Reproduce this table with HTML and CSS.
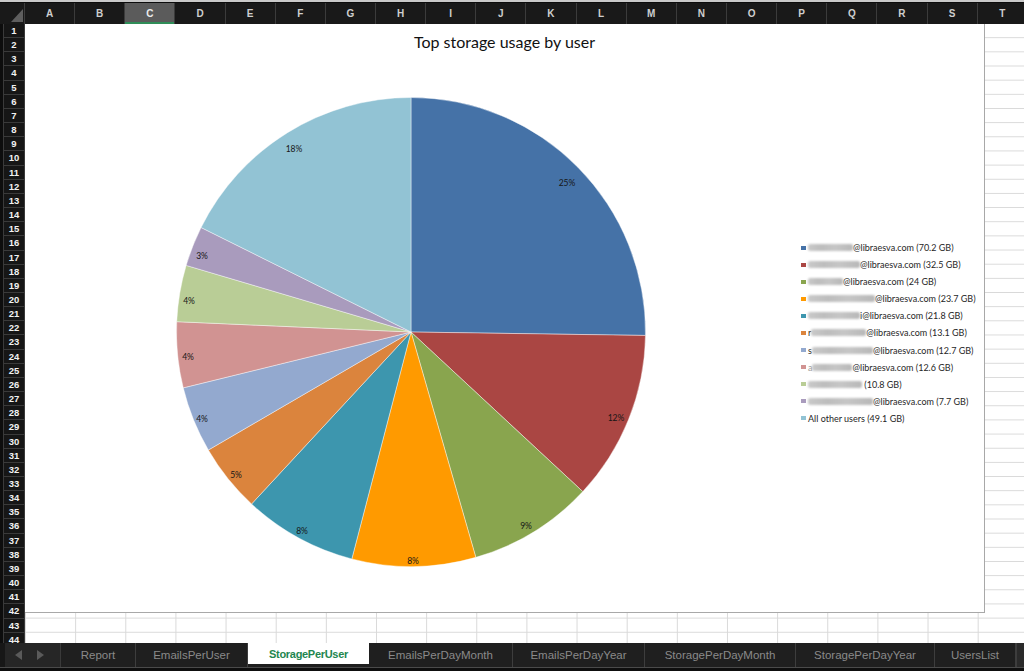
FILE: index.html
```html
<!DOCTYPE html>
<html>
<head>
<meta charset="utf-8">
<title>StoragePerUser</title>
<link rel="stylesheet" href="styles.css">
</head>
<body>
<div class="topstrip"></div>
<div class="colheads">
  <div class="corner"><svg width="25" height="22" viewBox="0 0 25 22"><polygon points="11,19 23,19 23,6" fill="#5e5e5e"/></svg></div>
  <div class="ch">A</div><div class="ch">B</div><div class="ch sel">C</div><div class="ch">D</div><div class="ch">E</div>
  <div class="ch">F</div><div class="ch">G</div><div class="ch">H</div><div class="ch">I</div><div class="ch">J</div>
  <div class="ch">K</div><div class="ch">L</div><div class="ch">M</div><div class="ch">N</div><div class="ch">O</div>
  <div class="ch">P</div><div class="ch">Q</div><div class="ch">R</div><div class="ch">S</div><div class="ch">T</div>
</div>
<div class="sheetbody">
  <div class="rowheads">
    <div class="rh">1</div><div class="rh">2</div><div class="rh">3</div><div class="rh">4</div><div class="rh">5</div>
    <div class="rh">6</div><div class="rh">7</div><div class="rh">8</div><div class="rh">9</div><div class="rh">10</div>
    <div class="rh">11</div><div class="rh">12</div><div class="rh">13</div><div class="rh">14</div><div class="rh">15</div>
    <div class="rh">16</div><div class="rh">17</div><div class="rh">18</div><div class="rh">19</div><div class="rh">20</div>
    <div class="rh">21</div><div class="rh">22</div><div class="rh">23</div><div class="rh">24</div><div class="rh">25</div>
    <div class="rh">26</div><div class="rh">27</div><div class="rh">28</div><div class="rh">29</div><div class="rh">30</div>
    <div class="rh">31</div><div class="rh">32</div><div class="rh">33</div><div class="rh">34</div><div class="rh">35</div>
    <div class="rh">36</div><div class="rh">37</div><div class="rh">38</div><div class="rh">39</div><div class="rh">40</div>
    <div class="rh">41</div><div class="rh">42</div><div class="rh">43</div><div class="rh">44</div>
  </div>
  <div class="cells">
    <div class="chart">
      <div class="chart-title">Top storage usage by user</div>
      <div class="plot">
        <svg class="pie" width="700" height="557" viewBox="0 0 700 557">
          <g stroke="#ffffff" stroke-width="0.6" stroke-opacity="0.7">
            <path fill="#4572a7" d="M386,278 L386,43.5 A234.5,234.5 0 0 1 620.47,281.44 Z"/>
            <path fill="#aa4643" d="M386,278 L620.47,281.44 A234.5,234.5 0 0 1 557.79,437.62 Z"/>
            <path fill="#89a54e" d="M386,278 L557.79,437.62 A234.5,234.5 0 0 1 450.82,503.36 Z"/>
            <path fill="#ff9a00" d="M386,278 L450.82,503.36 A234.5,234.5 0 0 1 326.80,504.91 Z"/>
            <path fill="#3d96ae" d="M386,278 L326.80,504.91 A234.5,234.5 0 0 1 226.57,449.97 Z"/>
            <path fill="#db843d" d="M386,278 L226.57,449.97 A234.5,234.5 0 0 1 183.36,396.02 Z"/>
            <path fill="#93a9cf" d="M386,278 L183.36,396.02 A234.5,234.5 0 0 1 158.25,333.86 Z"/>
            <path fill="#d19392" d="M386,278 L158.25,333.86 A234.5,234.5 0 0 1 151.73,267.68 Z"/>
            <path fill="#b9cd96" d="M386,278 L151.73,267.68 A234.5,234.5 0 0 1 161.16,211.40 Z"/>
            <path fill="#a99bbd" d="M386,278 L161.16,211.40 A234.5,234.5 0 0 1 176.07,173.50 Z"/>
            <path fill="#92c3d4" d="M386,278 L176.07,173.50 A234.5,234.5 0 0 1 386,43.5 Z"/>
          </g>
          <g class="plabels" text-anchor="middle">
            <text x="542" y="129">25%</text>
            <text x="591" y="364">12%</text>
            <text x="501" y="472">9%</text>
            <text x="388" y="507">8%</text>
            <text x="277" y="477">8%</text>
            <text x="211" y="421">5%</text>
            <text x="177" y="365">4%</text>
            <text x="163" y="303">4%</text>
            <text x="164" y="247">4%</text>
            <text x="177" y="202">3%</text>
            <text x="269" y="95">18%</text>
          </g>
        </svg>
        <ul class="legend">
          <li><i class="mk c1"></i><span class="redact w45"></span>@libraesva.com (70.2 GB)</li>
          <li><i class="mk c2"></i><span class="redact w52"></span>@libraesva.com (32.5 GB)</li>
          <li><i class="mk c3"></i><span class="redact w35"></span>@libraesva.com (24 GB)</li>
          <li><i class="mk c4"></i><span class="redact w67"></span>@libraesva.com (23.7 GB)</li>
          <li><i class="mk c5"></i><span class="redact w52"></span>i@libraesva.com (21.8 GB)</li>
          <li><i class="mk c6"></i>r<span class="redact w55"></span>@libraesva.com (13.1 GB)</li>
          <li><i class="mk c7"></i>s<span class="redact w61"></span>@libraesva.com (12.7 GB)</li>
          <li><i class="mk c8"></i><span class="faint">a</span><span class="redact w40"></span>@libraesva.com (12.6 GB)</li>
          <li><i class="mk c9"></i><span class="redact w54"></span>&nbsp;(10.8 GB)</li>
          <li><i class="mk c10"></i><span class="redact w65"></span>@libraesva.com (7.7 GB)</li>
          <li><i class="mk c11"></i>All other users (49.1 GB)</li>
        </ul>
      </div>
    </div>
  </div>
</div>
<div class="tabbar">
  <div class="navarrows">
    <svg width="8" height="10" viewBox="0 0 8 10"><polygon points="7,0 7,10 0,5" fill="#5a5a5a"/></svg>
    <svg width="8" height="10" viewBox="0 0 8 10"><polygon points="1,0 1,10 8,5" fill="#5a5a5a"/></svg>
  </div>
  <div class="tab t75">Report</div>
  <div class="tab t112">EmailsPerUser</div>
  <div class="tab t121 active">StoragePerUser</div>
  <div class="tab t144">EmailsPerDayMonth</div>
  <div class="tab t132">EmailsPerDayYear</div>
  <div class="tab t151">StoragePerDayMonth</div>
  <div class="tab t139">StoragePerDayYear</div>
  <div class="tab t81">UsersList</div>
  <div class="tabfill"></div>
</div>
<div class="statusbar"></div>
</body>
</html>
```
FILE: styles.css
```css
html, body {
  margin: 0;
  padding: 0;
}
body {
  width: 1024px;
  height: 671px;
  overflow: hidden;
  background: #1b1b1b;
  font-family: "Liberation Sans", Arial, sans-serif;
}
.topstrip {
  height: 2px;
  background: #c9c9c9;
}
.colheads {
  display: flex;
  height: 22px;
  background: #191919;
  overflow: hidden;
  border-top: 1px solid #0c0c0c;
  box-sizing: border-box;
}
.corner {
  width: 25px;
  flex: 0 0 25px;
  box-sizing: border-box;
  border-right: 1px solid #3c3c3c;
}
.corner svg { display: block; }
.ch {
  flex: 0 0 50.15px;
  width: 50.15px;
  box-sizing: border-box;
  border-right: 1px solid #3b3b3b;
  color: #cfcfcf;
  font-weight: bold;
  font-size: 10px;
  line-height: 21px;
  text-align: center;
}
.ch.sel {
  background: #5b5b5b;
  color: #ececec;
  box-shadow: inset 0 -2px 0 #2f8d58;
}
.sheetbody {
  display: flex;
  height: 619px;
  overflow: hidden;
}
.rowheads {
  flex: 0 0 25px;
  width: 25px;
  background: #0d0d0d;
  padding-left: 3px;
  box-sizing: border-box;
}
.rh {
  height: 14.17px;
  box-sizing: border-box;
  background: #161616;
  border: 1px solid #3a3a3a;
  border-top: none;
  color: #f2f2f2;
  font-weight: bold;
  font-size: 9.5px;
  line-height: 13px;
  text-align: center;
}
.cells {
  flex: 1;
  position: relative;
  background-color: #ffffff;
  background-image:
    linear-gradient(to right, #d9d9d9 1px, transparent 1px),
    linear-gradient(to bottom, transparent 13.17px, #d9d9d9 13.17px);
  background-size: 50.15px 14.17px, 50.15px 14.17px;
}
.chart {
  position: absolute;
  left: 0;
  top: 0;
  width: 960px;
  height: 589px;
  box-sizing: border-box;
  background: #ffffff;
  border-right: 1px solid #a8a8a8;
  border-bottom: 1px solid #a8a8a8;
  display: flex;
  flex-direction: column;
}
.chart-title {
  height: 30px;
  box-sizing: border-box;
  padding-top: 8px;
  text-align: center;
  font-family: Lato, "Liberation Sans", sans-serif;
  font-size: 16px;
  line-height: 20px;
  color: #111;
}
.plot {
  flex: 1;
  display: flex;
  align-items: center;
}
.pie {
  display: block;
  flex: 0 0 700px;
  align-self: flex-start;
}
.plabels text {
  font-family: Lato, "Liberation Sans", sans-serif;
  font-size: 8.5px;
  fill: #161616;
  dominant-baseline: central;
}
.legend {
  list-style: none;
  margin: 0 0 0 76px;
  padding: 0;
  font-family: Lato, "Liberation Sans", sans-serif;
  font-size: 9px;
  color: #262626;
}
.legend li {
  height: 17.03px;
  display: flex;
  align-items: center;
  white-space: nowrap;
}
.mk {
  display: inline-block;
  width: 4.5px;
  height: 4.5px;
  margin-right: 2.5px;
  flex: 0 0 auto;
}
.c1 { background: #4572a7; }
.c2 { background: #aa4643; }
.c3 { background: #89a54e; }
.c4 { background: #ff9a00; }
.c5 { background: #3d96ae; }
.c6 { background: #db843d; }
.c7 { background: #93a9cf; }
.c8 { background: #d19392; }
.c9 { background: #b9cd96; }
.c10 { background: #a99bbd; }
.c11 { background: #92c3d4; }
.redact {
  display: inline-block;
  height: 7px;
  background: linear-gradient(to right, #c9c9c9, #bdbdbd 30%, #c6c6c6 60%, #b8b8b8);
  filter: blur(1.2px);
  border-radius: 2px;
}
.faint { color: #9a9a9a; }
.w35 { width: 35px; }
.w40 { width: 40px; }
.w45 { width: 45px; }
.w52 { width: 52px; }
.w54 { width: 54px; }
.w55 { width: 55px; }
.w61 { width: 61px; }
.w65 { width: 65px; }
.w67 { width: 67px; }
.tabbar {
  height: 24px;
  display: flex;
  background: #1f1f1f;
}
.navarrows {
  flex: 0 0 61px;
  width: 61px;
  box-sizing: border-box;
  background: #262626;
  border-left: 5px solid #171717;
  border-right: 1px solid #3a3a3a;
  display: flex;
  align-items: center;
  justify-content: center;
  gap: 13px;
  padding-right: 6px;
}
.navarrows svg { display: block; }
.tab {
  box-sizing: border-box;
  flex: 0 0 auto;
  border-right: 1px solid #3d3d3d;
  color: #8a8a8a;
  font-size: 11.5px;
  line-height: 24px;
  text-align: center;
  white-space: nowrap;
}
.t75 { width: 75px; }
.t81 { width: 81px; }
.t112 { width: 112px; }
.t121 { width: 121px; }
.t132 { width: 132px; }
.t139 { width: 139px; }
.t144 { width: 144px; }
.t151 { width: 151px; }
.tab.active {
  background: #ffffff;
  color: #23864f;
  height: 21px;
  line-height: 23px;
  border-right: none;
  font-weight: bold;
  font-size: 11px;
  letter-spacing: -0.3px;
}
.tabfill {
  flex: 1;
  background: #2a2a2a;
  border-left: 1px solid #3d3d3d;
}
.statusbar {
  height: 4px;
  box-sizing: border-box;
  background: #0e0e0e;
  border-top: 1px solid #4a4a4a;
}
```
